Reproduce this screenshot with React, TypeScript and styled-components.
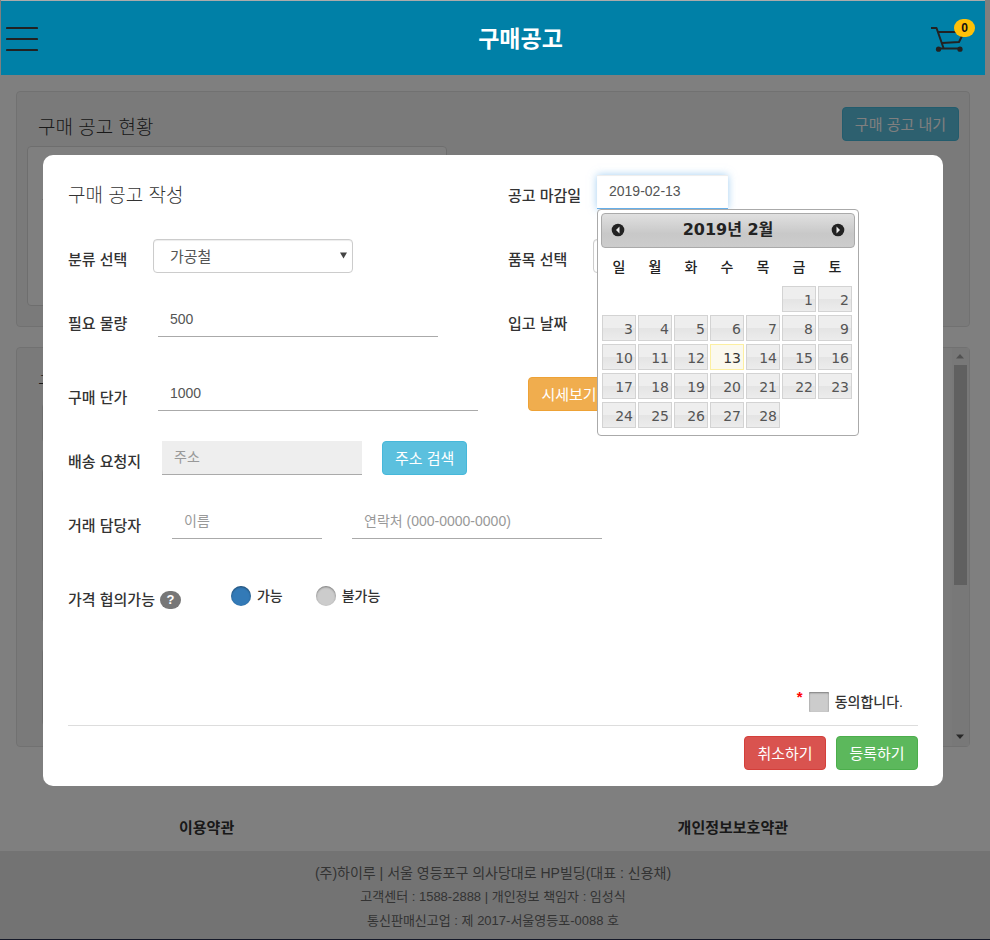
import React, { useState } from "react";
import styled, { createGlobalStyle } from "styled-components";

const textFont = '"Liberation Sans", "Noto Sans CJK KR", sans-serif';
const calendarFont = '"DejaVu Sans", "Noto Sans CJK KR", sans-serif';

const GlobalStyle = createGlobalStyle`
  *, *::before, *::after { box-sizing: border-box; }
  body {
    margin: 0;
    background: #ffffff;
    color: #333333;
    font-family: ${textFont};
    font-size: 15px;
    line-height: 20px;
  }
  button, input, select { font-family: inherit; font-size: inherit; }
`;

/* Page */

const Page = styled.div`
  display: flex;
  flex-direction: column;
  min-height: 100vh;
  border-bottom: 1px solid #2a3350;
`;

const Header = styled.header`
  position: relative;
  z-index: 20;
  display: flex;
  align-items: center;
  height: 75px;
  margin: 0 5px 0 1px;
  padding: 2px 10px 0 5px;
  background: #0080a7;
  border-top: 1px solid #ababab;
`;

const IconButton = styled.button`
  position: relative;
  display: block;
  padding: 0;
  border: 0;
  background: none;
  cursor: pointer;
  line-height: 0;
`;

const HeaderTitle = styled.h1`
  flex: 1;
  margin: 0;
  padding-left: 72px;
  color: #ffffff;
  font-size: 23px;
  line-height: 32px;
  font-weight: 700;
  text-align: center;
`;

const CartBadge = styled.span`
  position: absolute;
  top: -7px;
  right: 0;
  width: 21px;
  height: 18px;
  border-radius: 9px;
  background: #ffc107;
  color: #111111;
  font-size: 12px;
  font-weight: 700;
  line-height: 18px;
  text-align: center;
`;

const Main = styled.main`
  display: flex;
  flex-direction: column;
  gap: 20px;
  padding: 16px 20px 0 16px;
`;

const Well = styled.section<{ $height: number }>`
  display: flex;
  min-height: ${(p) => p.$height}px;
  border: 1px solid #e3e3e3;
  border-radius: 4px;
  background: #f5f5f5;
`;

const WellBody = styled.div`
  flex: 1;
  padding: 15px 10px 20px;
`;

const WellHead = styled.div`
  display: flex;
  justify-content: space-between;
  align-items: center;
  height: 34px;
  margin-bottom: 5px;
  padding-left: 11px;
`;

const SectionTitle = styled.h2`
  margin: 0;
  padding-top: 7px;
  font-size: 19px;
  line-height: 26px;
  font-weight: 300;
`;

const SummaryCard = styled.div`
  width: 44%;
  min-width: 420px;
  height: 160px;
  padding: 52px 14px 0;
  border: 1px solid #dddddd;
  border-radius: 4px;
  background: #ffffff;
`;

const Divider = styled.hr`
  margin: 0;
  border: 0;
  border-top: 1px solid #dddddd;
`;

const NoticeList = styled.div`
  display: flex;
  flex-direction: column;
  gap: 25px;
  padding: 1px 15px 0;
`;

const NoticeBox = styled.div<{ $height: number }>`
  height: ${(p) => p.$height}px;
  border: 1px solid #dddddd;
  border-radius: 4px;
`;

const ScrollTrack = styled.div`
  display: flex;
  flex-direction: column;
  align-items: center;
  width: 17px;
  padding: 6px 2px 7px 1px;
  background: #f1f1f1;
`;

const ScrollThumb = styled.div`
  width: 13px;
  height: 220px;
  margin: 6px 0 auto;
  background: #c1c1c1;
`;

const PolicyLinks = styled.nav`
  display: flex;
  justify-content: space-between;
  padding: 71px 202px 0 179px;
`;

const PolicyLink = styled.a`
  color: #333333;
  font-weight: 700;
  text-decoration: none;
`;

const Footer = styled.footer`
  flex: 1;
  margin-top: 13px;
  padding: 10px 4px 6px 0;
  background: #e7e7e7;
  color: #666666;
  text-align: center;
`;

const FooterLine = styled.p<{ $large?: boolean }>`
  margin: 0;
  font-size: ${(p) => (p.$large ? 14 : 13)}px;
  line-height: 24px;
`;

/* Form controls */

const buttonTones = {
  info: ["#5bc0de", "#46b8da"],
  warning: ["#f0ad4e", "#eea236"],
  danger: ["#d9534f", "#d43f3a"],
  success: ["#5cb85c", "#4cae4c"],
};

const Button = styled.button<{ $tone: keyof typeof buttonTones }>`
  min-width: 82px;
  height: 34px;
  padding: 1px 12px 0;
  border: 1px solid ${(p) => buttonTones[p.$tone][1]};
  border-radius: 4px;
  background: ${(p) => buttonTones[p.$tone][0]};
  color: #ffffff;
  line-height: 20px;
  white-space: nowrap;
  cursor: pointer;
`;

const LineInput = styled.input<{ $width: number }>`
  width: ${(p) => p.$width}px;
  height: 34px;
  padding: 0 12px 2px;
  border: 0;
  border-bottom: 1px solid #aaaaaa;
  border-radius: 0;
  outline: 0;
  background: #ffffff;
  color: #555555;
  font-size: 14px;
  &::placeholder { color: #999999; opacity: 1; }
  &:disabled { background: #eeeeee; }
`;

const DateInput = styled(LineInput)`
  border-bottom-color: #66afe9;
  box-shadow: inset 0 1px 1px rgba(0, 0, 0, 0.075), 0 0 8px rgba(102, 175, 233, 0.6);
`;

const SelectWrap = styled.div`
  position: relative;
  width: 200px;
  height: 34px;
`;

const Select = styled.select`
  width: 100%;
  height: 34px;
  padding: 0 16px;
  border: 1px solid #cccccc;
  border-radius: 4px;
  appearance: none;
  background: #ffffff;
  box-shadow: inset 0 1px 1px rgba(0, 0, 0, 0.075);
  color: #555555;
`;

const SelectArrow = styled.svg`
  position: absolute;
  top: 13px;
  right: 6px;
  pointer-events: none;
`;

const Choice = styled.input<{ $round?: boolean }>`
  width: 20px;
  height: 20px;
  margin: 0;
  appearance: none;
  border-radius: ${(p) => (p.$round ? "50%" : "1px")};
  background: #cccccc;
  box-shadow: inset 0 1px 2px rgba(0, 0, 0, 0.4);
  cursor: pointer;
  &:checked { background: #337ab7; }
`;

const ChoiceLabel = styled.label`
  display: flex;
  align-items: center;
  gap: 6px;
  font-size: 14px;
  font-weight: 500;
  cursor: pointer;
`;

/* Dialog */

const Backdrop = styled.div`
  position: fixed;
  inset: 0;
  z-index: 10;
  display: flex;
  justify-content: center;
  align-items: flex-start;
  padding: 155px 4px 0 0;
  background: rgba(0, 0, 0, 0.5);
`;

const Dialog = styled.form`
  width: 900px;
  max-width: 96%;
  padding: 20px 25px 16px;
  border-radius: 10px;
  background: #ffffff;
`;

const Row = styled.div<{ $space?: number }>`
  display: grid;
  grid-template-columns: 440px 1fr;
  min-height: 34px;
  margin-top: ${(p) => p.$space ?? 0}px;
`;

const WideRow = styled(Row)`
  grid-template-columns: 1fr;
`;

const Field = styled.div<{ $gap: number }>`
  position: relative;
  display: flex;
  align-items: center;
  gap: ${(p) => p.$gap}px;
`;

const ActionCell = styled.div`
  padding-left: 20px;
`;

const Label = styled.label<{ $width: number }>`
  flex: none;
  width: ${(p) => p.$width}px;
  padding-top: 7px;
  font-weight: 500;
  white-space: nowrap;
`;

const GroupLabel = styled.span`
  display: flex;
  align-items: center;
  gap: 5px;
  padding-top: 7px;
  font-weight: 500;
`;

const HelpBadge = styled.button`
  width: 21px;
  height: 18px;
  padding: 0;
  border: 0;
  border-radius: 9px;
  background: #777777;
  color: #ffffff;
  font-size: 13px;
  font-weight: 700;
  line-height: 18px;
  cursor: help;
`;

const ChoiceGroup = styled.div`
  display: flex;
  gap: 33px;
`;

const DateWrap = styled.div`
  position: relative;
`;

const Agreement = styled.div`
  display: flex;
  justify-content: flex-end;
  align-items: center;
  gap: 6px;
  margin: 79px 0 13px;
  padding-right: 15px;
`;

const Required = styled.span`
  color: #ff0000;
  font-weight: 700;
  line-height: 10px;
  align-self: flex-start;
`;

const DialogActions = styled.div`
  display: flex;
  justify-content: flex-end;
  gap: 10px;
  padding-top: 10px;
`;

/* Calendar */

const Calendar = styled.div`
  position: absolute;
  top: 34px;
  left: 0;
  z-index: 5;
  width: 262px;
  padding: 3px 3px 5px;
  border: 1px solid #aaaaaa;
  border-radius: 4px;
  background: #ffffff;
  font-family: ${calendarFont};
`;

const CalendarHead = styled.div`
  display: flex;
  align-items: center;
  justify-content: space-between;
  height: 35px;
  padding: 0 9px 2px;
  border: 1px solid #aaaaaa;
  border-radius: 4px;
  background: linear-gradient(#e0e0e0, #c8c8c8 60%, #cccccc);
  color: #222222;
  font-size: 16px;
  font-weight: 700;
`;

const Days = styled.table`
  width: 252px;
  border-collapse: collapse;
  table-layout: fixed;
  font-size: 14px;
`;

const Weekday = styled.th`
  height: 37px;
  padding: 0;
  color: #222222;
  font-weight: 500;
  text-align: center;
`;

const DayCell = styled.td`
  padding: 1px 1px 2px;
`;

const Day = styled.button<{ $selected: boolean }>`
  display: block;
  width: 100%;
  height: 26px;
  padding: 2px 2px 0;
  border: 1px solid ${(p) => (p.$selected ? "#fcefa1" : "#d3d3d3")};
  background: ${(p) =>
    p.$selected ? "#fbf9ee" : "linear-gradient(#eeeeee 50%, #e4e4e4 50%, #ececec)"};
  color: ${(p) => (p.$selected ? "#363636" : "#555555")};
  text-align: right;
  cursor: pointer;
`;

const weekdays = ["일", "월", "화", "수", "목", "금", "토"];
const firstWeekday = 5;
const weeks = Array.from({ length: 5 }, (_, w) =>
  Array.from({ length: 7 }, (_, d) => {
    const day = w * 7 + d - firstWeekday + 1;
    return day >= 1 && day <= 28 ? day : null;
  })
);

function MonthArrow({ next }: { next?: boolean }) {
  return (
    <svg width="14" height="14" viewBox="0 0 14 14">
      <circle cx="7" cy="7" r="6.300" fill="#222222" />
      <path d={next ? "M5.5 3.5 9 7 5.5 10.5z" : "M8.5 3.5 5 7l3.5 3.5z"} fill="#e8e8e8" />
    </svg>
  );
}

function DatePicker({ day, onPick }: { day: number; onPick: (day: number) => void }) {
  return (
    <Calendar>
      <CalendarHead>
        <IconButton type="button" aria-label="이전 달">
          <MonthArrow />
        </IconButton>
        <span>2019년 2월</span>
        <IconButton type="button" aria-label="다음 달">
          <MonthArrow next />
        </IconButton>
      </CalendarHead>
      <Days>
        <thead>
          <tr>
            {weekdays.map((name) => (
              <Weekday key={name} scope="col">{name}</Weekday>
            ))}
          </tr>
        </thead>
        <tbody>
          {weeks.map((week, w) => (
            <tr key={w}>
              {week.map((d, i) => (
                <DayCell key={i}>
                  {d && (
                    <Day type="button" $selected={d === day} onClick={() => onPick(d)}>
                      {d}
                    </Day>
                  )}
                </DayCell>
              ))}
            </tr>
          ))}
        </tbody>
      </Days>
    </Calendar>
  );
}

function Dropdown({ id, option }: { id: string; option: string }) {
  return (
    <SelectWrap>
      <Select id={id}>
        <option>{option}</option>
      </Select>
      <SelectArrow width="7" height="7" viewBox="0 0 7 7">
        <path d="M0 .5h7L3.500 6.500z" fill="#444444" />
      </SelectArrow>
    </SelectWrap>
  );
}

function NoticeDialog() {
  const [day, setDay] = useState(13);
  return (
    <Backdrop>
      <Dialog role="dialog" aria-labelledby="dialog-title" onSubmit={(e) => e.preventDefault()}>
        <Row>
          <Field $gap={0}>
            <SectionTitle id="dialog-title">구매 공고 작성</SectionTitle>
          </Field>
          <Field $gap={15}>
            <Label htmlFor="deadline" $width={74}>공고 마감일</Label>
            <DateWrap>
              <DateInput
                id="deadline"
                $width={131}
                value={`2019-02-${String(day).padStart(2, "0")}`}
                readOnly
              />
              <DatePicker day={day} onPick={setDay} />
            </DateWrap>
          </Field>
        </Row>
        <Row $space={30}>
          <Field $gap={25}>
            <Label htmlFor="category" $width={60}>분류 선택</Label>
            <Dropdown id="category" option="가공철" />
          </Field>
          <Field $gap={25}>
            <Label htmlFor="item" $width={60}>품목 선택</Label>
            <Dropdown id="item" option="" />
          </Field>
        </Row>
        <Row $space={30}>
          <Field $gap={30}>
            <Label htmlFor="amount" $width={60}>필요 물량</Label>
            <LineInput id="amount" $width={280} defaultValue="500" />
          </Field>
          <Field $gap={30}>
            <Label htmlFor="arrival" $width={60}>입고 날짜</Label>
            <LineInput id="arrival" $width={130} />
          </Field>
        </Row>
        <Row $space={40}>
          <Field $gap={30}>
            <Label htmlFor="price" $width={60}>구매 단가</Label>
            <LineInput id="price" $width={320} defaultValue="1000" />
          </Field>
          <ActionCell>
            <Button type="button" $tone="warning">시세보기</Button>
          </ActionCell>
        </Row>
        <WideRow $space={30}>
          <Field $gap={20}>
            <Label htmlFor="address" $width={74}>배송 요청지</Label>
            <LineInput id="address" $width={200} placeholder="주소" disabled />
            <Button type="button" $tone="info">주소 검색</Button>
          </Field>
        </WideRow>
        <WideRow $space={30}>
          <Field $gap={30}>
            <Label htmlFor="manager" $width={74}>거래 담당자</Label>
            <LineInput id="manager" $width={150} placeholder="이름" />
            <LineInput
              $width={250}
              placeholder="연락처 (000-0000-0000)"
              aria-label="연락처"
            />
          </Field>
        </WideRow>
        <WideRow $space={40}>
          <Field $gap={50}>
            <GroupLabel>
              가격 협의가능
              <HelpBadge type="button">?</HelpBadge>
            </GroupLabel>
            <ChoiceGroup>
              <ChoiceLabel>
                <Choice type="radio" name="negotiable" $round defaultChecked />
                가능
              </ChoiceLabel>
              <ChoiceLabel>
                <Choice type="radio" name="negotiable" $round />
                불가능
              </ChoiceLabel>
            </ChoiceGroup>
          </Field>
        </WideRow>
        <Agreement>
          <Required>*</Required>
          <ChoiceLabel>
            <Choice type="checkbox" />
            동의합니다.
          </ChoiceLabel>
        </Agreement>
        <Divider />
        <DialogActions>
          <Button type="button" $tone="danger">취소하기</Button>
          <Button type="submit" $tone="success">등록하기</Button>
        </DialogActions>
      </Dialog>
    </Backdrop>
  );
}

export default function App() {
  return (
    <Page>
      <GlobalStyle />
      <Header>
        <IconButton type="button" aria-label="메뉴">
          <svg width="32" height="26" viewBox="0 0 32 26" stroke="#222222" strokeWidth="2.200" strokeLinecap="round">
            <path d="M1 2h30M1 13h30M1 24h30" />
          </svg>
        </IconButton>
        <HeaderTitle>구매공고</HeaderTitle>
        <IconButton type="button" aria-label="장바구니">
          <svg width="44" height="26" viewBox="0 0 44 26" fill="none" stroke="#222222" strokeWidth="2" strokeLinejoin="round">
            <path d="M0 2h5.500L12.500 22M7 6h26l-5 10-17 1" />
            <path d="M8 22.500h21" />
            <circle cx="7.500" cy="23.200" r="2.600" fill="#222222" stroke="none" />
            <circle cx="29" cy="23.200" r="2.600" fill="#222222" stroke="none" />
          </svg>
          <CartBadge>0</CartBadge>
        </IconButton>
      </Header>
      <Main>
        <Well $height={236}>
          <WellBody>
            <WellHead>
              <SectionTitle>구매 공고 현황</SectionTitle>
              <Button type="button" $tone="info">구매 공고 내기</Button>
            </WellHead>
            <SummaryCard>
              <Divider />
            </SummaryCard>
          </WellBody>
        </Well>
        <Well $height={400}>
          <WellBody>
            <WellHead>
              <SectionTitle>구매 공고</SectionTitle>
            </WellHead>
            <NoticeList>
              <NoticeBox $height={40} />
              <NoticeBox $height={155} />
              <NoticeBox $height={78} />
            </NoticeList>
          </WellBody>
          <ScrollTrack>
            <svg width="8" height="5" viewBox="0 0 8 5">
              <path d="M4 0l4 4.500H0z" fill="#a3a3a3" />
            </svg>
            <ScrollThumb />
            <svg width="8" height="5" viewBox="0 0 8 5">
              <path d="M4 5L0 .5h8z" fill="#505050" />
            </svg>
          </ScrollTrack>
        </Well>
      </Main>
      <PolicyLinks>
        <PolicyLink href="#terms">이용약관</PolicyLink>
        <PolicyLink href="#privacy">개인정보보호약관</PolicyLink>
      </PolicyLinks>
      <Footer>
        <FooterLine $large>(주)하이루 | 서울 영등포구 의사당대로 HP빌딩(대표 : 신용채)</FooterLine>
        <FooterLine>고객센터 : 1588-2888 | 개인정보 책임자 : 임성식</FooterLine>
        <FooterLine>통신판매신고업 : 제 2017-서울영등포-0088 호</FooterLine>
      </Footer>
      <NoticeDialog />
    </Page>
  );
}
